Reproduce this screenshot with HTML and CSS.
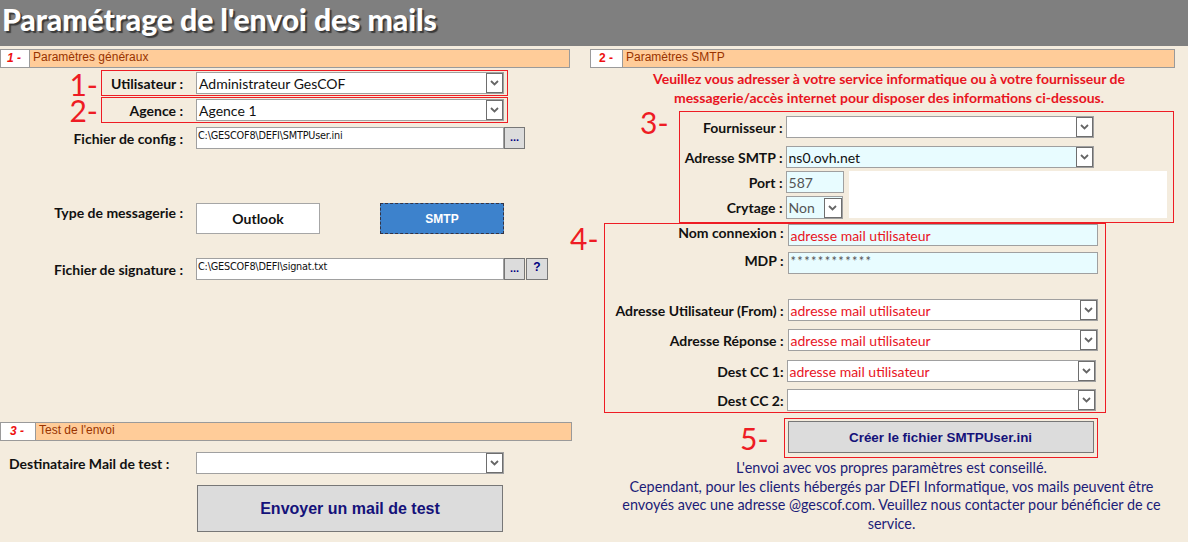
FILE: index.html
```html
<!DOCTYPE html>
<html lang="fr">
<head>
<meta charset="utf-8">
<title>Paramétrage de l'envoi des mails</title>
<link rel="stylesheet" href="styles.css">
</head>
<body>
<header class="titlebar"><h1>Paramétrage de l'envoi des mails</h1></header>
<main class="page">
  <section class="col col-left">
    <div class="sec-head sh-1"><span class="sec-num">1 -</span><span class="sec-title">Paramètres généraux</span></div>

    <div class="mark-row row-user">
      <span class="mark m1">1-</span>
      <div class="redbox box-user">
        <span class="lbl lbl-in">Utilisateur :</span>
        <div class="select sel-l"><span class="val big">Administrateur GesCOF</span><span class="arrow"><svg width="9" height="6" viewBox="0 0 9 6"><path d="M1 1l3.5 3.5L8 1" fill="none" stroke="#666" stroke-width="1.8"/></svg></span></div>
      </div>
    </div>

    <div class="mark-row row-agence">
      <span class="mark m1">2-</span>
      <div class="redbox box-agence">
        <span class="lbl lbl-in">Agence :</span>
        <div class="select sel-l"><span class="val big">Agence 1</span><span class="arrow"><svg width="9" height="6" viewBox="0 0 9 6"><path d="M1 1l3.5 3.5L8 1" fill="none" stroke="#666" stroke-width="1.8"/></svg></span></div>
      </div>
    </div>

    <div class="frow row-config">
      <span class="lbl lbl-out">Fichier de config :</span>
      <div class="input inp-l"><span class="val small">C:\GESCOF8\DEFI\SMTPUser.ini</span></div>
      <span class="mini-btn">...</span>
    </div>

    <div class="frow row-type">
      <span class="lbl lbl-out lbl-top">Type de messagerie :</span>
      <span class="opt-btn outlook">Outlook</span>
      <span class="opt-btn smtp">SMTP</span>
    </div>

    <div class="frow row-sign">
      <span class="lbl lbl-out">Fichier de signature :</span>
      <div class="input inp-l"><span class="val small">C:\GESCOF8\DEFI\signat.txt</span></div>
      <span class="mini-btn">...</span>
      <span class="mini-btn q">?</span>
    </div>

    <div class="sec-head sh-3"><span class="sec-num num-3">3 -</span><span class="sec-title">Test de l'envoi</span></div>

    <div class="frow row-dest">
      <span class="lbl lbl-left">Destinataire Mail de test :</span>
      <div class="select sel-l"><span class="val big"></span><span class="arrow"><svg width="9" height="6" viewBox="0 0 9 6"><path d="M1 1l3.5 3.5L8 1" fill="none" stroke="#666" stroke-width="1.8"/></svg></span></div>
    </div>

    <div class="frow row-send">
      <span class="gray-btn send-btn">Envoyer un mail de test</span>
    </div>
  </section>

  <section class="col col-right">
    <div class="sec-head sh-2"><span class="sec-num num-2">2 -</span><span class="sec-title">Paramètres SMTP</span></div>
    <p class="notice">Veuillez vous adresser à votre service informatique ou à votre fournisseur de<br>messagerie/accès internet pour disposer des informations ci-dessous.</p>

    <div class="mark-row row-b3">
      <span class="mark m3">3-</span>
      <div class="redbox box3">
        <div class="frow b3-r1">
          <span class="lbl lbl-b3">Fournisseur :</span>
          <div class="select sel-r"><span class="val big"></span><span class="arrow"><svg width="9" height="6" viewBox="0 0 9 6"><path d="M1 1l3.5 3.5L8 1" fill="none" stroke="#666" stroke-width="1.8"/></svg></span></div>
        </div>
        <div class="frow b3-r2">
          <span class="lbl lbl-b3">Adresse SMTP :</span>
          <div class="select sel-r cyan"><span class="val big">ns0.ovh.net</span><span class="arrow"><svg width="9" height="6" viewBox="0 0 9 6"><path d="M1 1l3.5 3.5L8 1" fill="none" stroke="#666" stroke-width="1.8"/></svg></span></div>
        </div>
        <div class="b3-bottom">
          <div class="b3-fields">
            <div class="frow b3-r3">
              <span class="lbl lbl-b3">Port :</span>
              <div class="input inp-port cyan"><span class="val big grey">587</span></div>
            </div>
            <div class="frow b3-r4">
              <span class="lbl lbl-b3">Crytage :</span>
              <div class="select sel-crypt cyan"><span class="val big grey">Non</span><span class="arrow"><svg width="9" height="6" viewBox="0 0 9 6"><path d="M1 1l3.5 3.5L8 1" fill="none" stroke="#666" stroke-width="1.8"/></svg></span></div>
            </div>
          </div>
          <div class="white-pane"></div>
        </div>
      </div>
    </div>

    <div class="mark-row row-b4">
      <span class="mark m4">4-</span>
      <div class="redbox box4">
        <div class="frow b4-r1">
          <span class="lbl lbl-b4">Nom connexion :</span>
          <div class="input inp-r cyan"><span class="val big red">adresse mail utilisateur</span></div>
        </div>
        <div class="frow b4-r2">
          <span class="lbl lbl-b4 lbl-top">MDP :</span>
          <div class="input inp-r cyan"><span class="val pwd">************</span></div>
        </div>
        <div class="frow b4-r3">
          <span class="lbl lbl-b4">Adresse Utilisateur (From) :</span>
          <div class="select sel-b4"><span class="val big red">adresse mail utilisateur</span><span class="arrow"><svg width="9" height="6" viewBox="0 0 9 6"><path d="M1 1l3.5 3.5L8 1" fill="none" stroke="#666" stroke-width="1.8"/></svg></span></div>
        </div>
        <div class="frow b4-r4">
          <span class="lbl lbl-b4">Adresse Réponse :</span>
          <div class="select sel-b4"><span class="val big red">adresse mail utilisateur</span><span class="arrow"><svg width="9" height="6" viewBox="0 0 9 6"><path d="M1 1l3.5 3.5L8 1" fill="none" stroke="#666" stroke-width="1.8"/></svg></span></div>
        </div>
        <div class="frow b4-r5">
          <span class="lbl lbl-b4 lbl-cc">Dest CC 1:</span>
          <div class="select sel-cc"><span class="val big red">adresse mail utilisateur</span><span class="arrow"><svg width="9" height="6" viewBox="0 0 9 6"><path d="M1 1l3.5 3.5L8 1" fill="none" stroke="#666" stroke-width="1.8"/></svg></span></div>
        </div>
        <div class="frow b4-r6">
          <span class="lbl lbl-b4 lbl-cc">Dest CC 2:</span>
          <div class="select sel-cc"><span class="val big"></span><span class="arrow"><svg width="9" height="6" viewBox="0 0 9 6"><path d="M1 1l3.5 3.5L8 1" fill="none" stroke="#666" stroke-width="1.8"/></svg></span></div>
        </div>
      </div>
    </div>

    <div class="mark-row row-b5">
      <span class="mark m5">5-</span>
      <div class="redbox box5">
        <span class="gray-btn create-btn">Créer le fichier SMTPUser.ini</span>
      </div>
    </div>

    <p class="info">L'envoi avec vos propres paramètres est conseillé.<br>Cependant, pour les clients hébergés par DEFI Informatique, vos mails peuvent être<br>envoyés avec une adresse @gescof.com. Veuillez nous contacter pour bénéficier de ce<br>service.</p>
  </section>
</main>
</body>
</html>
```

FILE: styles.css
```css
* { box-sizing: border-box; }
html, body { margin: 0; padding: 0; }
body {
  width: 1188px;
  height: 542px;
  overflow: hidden;
  background: #f4ecde;
  font-family: Lato, "Open Sans", sans-serif;
  color: #111;
}

/* Title bar */
.titlebar {
  height: 46px;
  background: #7f7f7f;
  padding: 0 0 0 2px;
}
.titlebar h1 {
  margin: 0;
  font-family: Lato, sans-serif;
  font-weight: 900;
  font-size: 30.2px;
  line-height: 39px;
  color: #fff;
  letter-spacing: -0.1px;
  text-shadow: 2px 2px 1px #3a3a3a;
}

.page { display: flex; }
.col { display: flex; flex-direction: column; }
.col-left { width: 570px; flex: none; }
.col-right { width: 618px; flex: none; }

/* Section headers */
.sec-head {
  display: flex;
  height: 19px;
  border: 1px solid #9a9a9a;
  background: #ffcc99;
}
.sh-1 { margin-top: 3px; width: 570px; }
.sh-2 { margin-top: 3px; margin-left: 20px; width: 585px; }
.sh-3 { margin-top: 142px; width: 572px; }
.sec-num {
  width: 29px;
  flex: none;
  background: #fff;
  border-right: 1px solid #9a9a9a;
  color: #ee1111;
  font-family: "Liberation Sans", Arial, sans-serif;
  font-style: italic;
  font-weight: bold;
  font-size: 12px;
  line-height: 17px;
  padding-left: 6px;
}
.num-2 { width: 32px; padding-left: 8px; font-style: normal; }
.num-3 { width: 35px; padding-left: 9px; }
.sec-title {
  font-family: "Liberation Sans", Arial, sans-serif;
  font-size: 12px;
  line-height: 14px;
  color: #993300;
  padding-left: 3px;
}

/* Generic rows */
.frow { display: flex; align-items: center; }
.mark-row { display: flex; align-items: flex-start; }
.mark {
  color: #ee1c24;
  font-family: Lato, sans-serif;
  font-weight: 400;
  font-size: 30px;
  line-height: 24px;
  flex: none;
}
.redbox {
  border: 1px solid #ee1c24;
  flex: none;
}
.lbl {
  font-family: Lato, sans-serif;
  font-weight: bold;
  font-size: 14px;
  color: #111;
  white-space: nowrap;
  flex: none;
}
.lbl-out { width: 183px; text-align: right; margin-right: 13px; }
.lbl-in { width: 81px; text-align: right; margin-right: 13px; }
.lbl-left { width: 196px; padding-left: 9px; }
.lbl-top { align-self: flex-start; }

/* Controls */
.select, .input {
  display: flex;
  align-items: center;
  height: 22px;
  background: #fff;
  border: 1px solid #a0a0a0;
  flex: none;
  overflow: hidden;
}
.cyan { background: #e8fcff; }
.val {
  flex: 1;
  white-space: nowrap;
  overflow: hidden;
  padding-left: 2px;
  color: #111;
}
.big { font-size: 14px; }
.small {
  font-size: 10.8px;
  font-family: "DejaVu Sans Condensed", "DejaVu Sans", sans-serif;
  font-stretch: condensed;
  letter-spacing: -0.2px;
  align-self: flex-start;
  line-height: 15px;
  padding-left: 1px;
}
.red { color: #e8141e; }
.grey { color: #555; }
.pwd { font-size: 13px; color: #555; align-self: flex-start; line-height: 17px; letter-spacing: 1.3px; }
.arrow {
  width: 17px;
  height: 20px;
  flex: none;
  border: 1px solid #6e6e6e;
  background: #fff;
  display: flex;
  align-items: center;
  justify-content: center;
}
.sel-l, .inp-l { width: 308px; }
.mini-btn {
  width: 21px;
  height: 22px;
  flex: none;
  background: #dcdcdc;
  border: 1px solid #777;
  font-family: "Liberation Sans", Arial, sans-serif;
  font-weight: bold;
  font-size: 11px;
  color: #000080;
  text-align: center;
  line-height: 18px;
}
.mini-btn.q { width: 22px; margin-left: 1px; line-height: 16px; font-size: 12px; }

/* Left column rows */
.row-user { margin-top: 2px; }
.row-agence { margin-top: 1px; }
.m1 { width: 101px; text-align: right; padding-right: 3px; }
.row-user .m1 { padding-top: 2px; }
.row-agence .m1 { padding-top: 1px; }
.box-user, .box-agence {
  width: 407px;
  height: 26px;
  display: flex;
  align-items: center;
}
.row-config { margin-top: 4px; }
.row-type { margin-top: 54px; align-items: flex-start; }
.row-type .lbl { padding-top: 1px; }
.opt-btn {
  width: 124px;
  height: 31px;
  flex: none;
  display: flex;
  align-items: center;
  justify-content: center;
  font-family: Lato, sans-serif;
  font-weight: bold;
  font-size: 14px;
}
.outlook { background: #fff; border: 1px solid #a6a6a6; color: #111; }
.smtp {
  margin-left: 60px;
  background: #3d82cc;
  border: 1px dashed #334;
  color: #fff;
  font-family: "Liberation Sans", Arial, sans-serif;
  font-size: 12px;
}
.row-sign { margin-top: 24px; }
.row-dest { margin-top: 11px; }
.row-send { margin-top: 11px; padding-left: 197px; }
.gray-btn {
  display: flex;
  align-items: center;
  justify-content: center;
  background: #dcdcdc;
  border: 1px solid #777;
  color: #14127a;
  font-family: "Liberation Sans", Arial, sans-serif;
  font-weight: bold;
  flex: none;
}
.send-btn { width: 306px; height: 47px; font-size: 16px; }

/* Right column */
.notice {
  margin: 1px 0 0 20px;
  width: 598px;
  text-align: center;
  white-space: nowrap;
  color: #e8141e;
  font-family: Lato, sans-serif;
  font-weight: bold;
  font-size: 14px;
  line-height: 19px;
}
.row-b3 { margin-top: 4px; padding-left: 70px; }
.m3 { margin-right: 10px; margin-top: -1px; }
.box3 {
  width: 495px;
  height: 112px;
  padding: 4px 0 0 0;
}
.lbl-b3 { width: 103px; text-align: right; margin-right: 3px; }
.sel-r { width: 308px; }
.b3-r2 { margin-top: 8px; }
.b3-bottom { display: flex; margin-top: 3px; }
.b3-r4 { margin-top: 3px; }
.inp-port { width: 58px; }
.sel-crypt { width: 57px; height: 23px; }
.sel-crypt .arrow { width: 18px; }
.white-pane {
  width: 318px;
  height: 47px;
  margin-left: 5px;
  background: #fff;
}

.row-b4 { padding-left: 0; }
.m4 { margin-right: 5px; margin-top: 3px; }
.box4 {
  width: 502px;
  height: 190px;
  padding-top: 0;
}
.lbl-b4 { width: 179px; text-align: right; margin-right: 4px; }
.lbl-cc { margin-right: 3px; }
.inp-r, .sel-b4 { width: 310px; }
.sel-cc { width: 309px; }
.b4-r1 .lbl { align-self: flex-start; line-height: 18px; }
.b4-r2 { margin-top: 6px; }
.b4-r3 { margin-top: 25px; }
.b4-r4 { margin-top: 8px; }
.b4-r5 { margin-top: 9px; }
.b4-r6 { margin-top: 7px; }

.row-b5 { margin-top: 5px; padding-left: 170px; }
.m5 { margin-right: 15px; margin-top: 8px; }
.box5 {
  width: 314px;
  height: 40px;
  padding: 2px 3px;
}
.create-btn { width: 306px; height: 32px; font-size: 13.4px; }

.info {
  margin: 1px 0 0 20px;
  width: 603px;
  text-align: center;
  white-space: nowrap;
  color: #1c1c78;
  font-family: Lato, sans-serif;
  font-size: 14.4px;
  line-height: 18.5px;
}
```
